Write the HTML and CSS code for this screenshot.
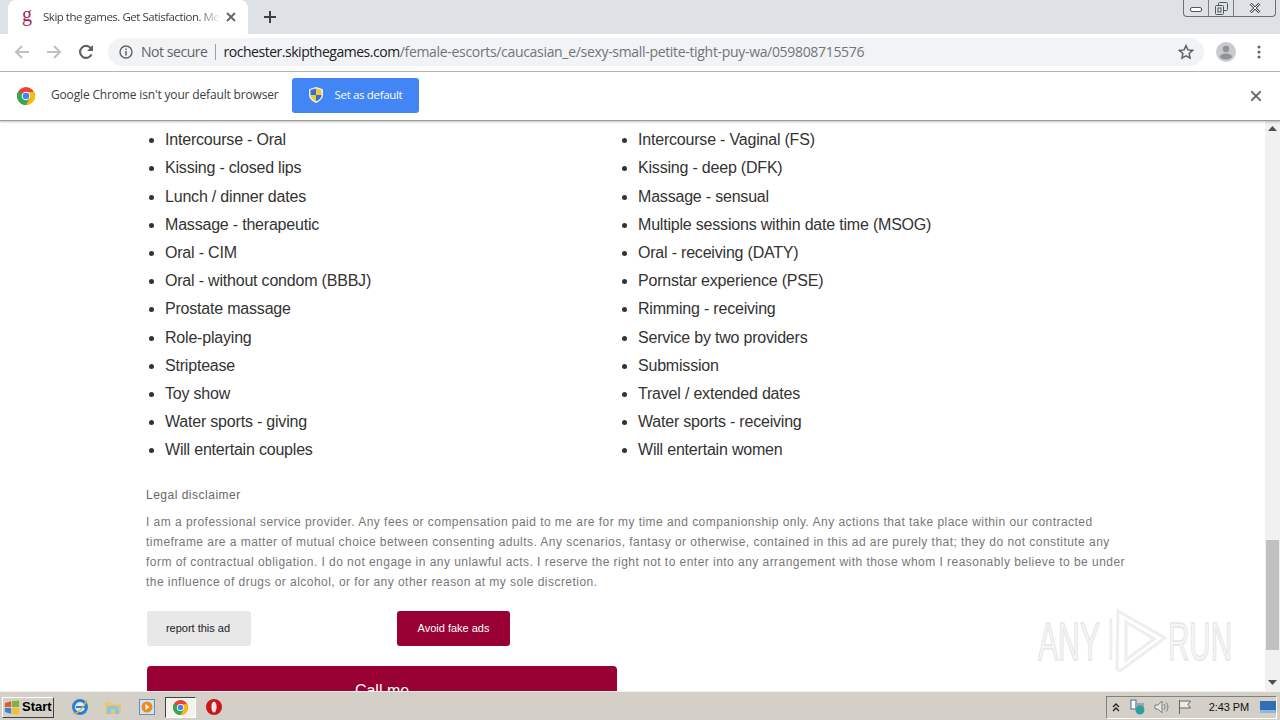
FILE: index.html
```html
<!DOCTYPE html>
<html lang="en">
<head>
<meta charset="utf-8">
<title>Skip the games</title>
<link rel="stylesheet" href="styles.css">
</head>
<body>
<div class="tabstrip">
  <div class="tab">
    <span class="favicon">g</span>
    <span class="tab-title">Skip the games. Get Satisfaction. Me</span>
    <svg class="tab-close" width="10" height="10" viewBox="0 0 10 10"><path d="M1 1l8 8M9 1l-8 8" stroke="#5f6368" stroke-width="1.8"/></svg>
  </div>
  <svg class="new-tab" width="12" height="12" viewBox="0 0 12 12"><path d="M6 0v12M0 6h12" stroke="#3c4043" stroke-width="2"/></svg>
  <div class="win-controls">
    <div class="win-btn win-min"><svg width="12" height="6" viewBox="0 0 12 6"><rect x=".5" y=".5" width="11" height="4" rx="1.5" fill="#fff" stroke="#50565e"/></svg></div>
    <div class="win-btn win-max"><svg width="13" height="13" viewBox="0 0 13 13"><rect x="3.5" y=".5" width="9" height="8" rx="1" fill="none" stroke="#50565e"/><rect x=".5" y="3.5" width="8" height="9" rx="1" fill="#dee1e6" stroke="#50565e"/><rect x="3" y="6" width="3" height="4" fill="none" stroke="#50565e"/></svg></div>
    <div class="win-btn win-close"><svg width="12" height="10" viewBox="0 0 12 10"><path d="M1.5 .5l9 9M10.5 .5l-9 9" stroke="#50565e" stroke-width="2.6"/><path d="M1.5 .5l9 9M10.5 .5l-9 9" stroke="#fff" stroke-width="1"/></svg></div>
  </div>
</div>

<div class="toolbar">
  <svg class="tb-icon" width="16" height="16" viewBox="0 0 16 16"><path d="M15 8H2M8 2L2 8l6 6" fill="none" stroke="#bdc1c6" stroke-width="2"/></svg>
  <svg class="tb-icon" width="16" height="16" viewBox="0 0 16 16"><path d="M1 8h13M8 2l6 6-6 6" fill="none" stroke="#bdc1c6" stroke-width="2"/></svg>
  <svg class="tb-icon" width="16" height="16" viewBox="0 0 16 16"><path d="M13.500 10.500A6 6 0 1 1 13 4.500" fill="none" stroke="#5f6368" stroke-width="2.200"/><path d="M15 1v6H9z" fill="#5f6368"/></svg>
  <div class="omnibox">
    <svg class="info" width="14" height="14" viewBox="0 0 14 14"><circle cx="7" cy="7" r="6" fill="none" stroke="#5f6368" stroke-width="1.400"/><path d="M7 6v4.500M7 3.400v1.600" stroke="#5f6368" stroke-width="1.500"/></svg>
    <span class="not-secure">Not secure</span>
    <span class="omni-sep"></span>
    <span class="url"><span class="url-host">rochester.skipthegames.com</span>/female-escorts/caucasian_e/sexy-small-petite-tight-puy-wa/059808715576</span>
    <svg class="star" width="16" height="16" viewBox="0 0 16 16"><path d="M8 1.600l1.900 4.300 4.700.5-3.500 3.100 1 4.600L8 11.800l-4.100 2.300 1-4.600-3.500-3.100 4.700-.5z" fill="none" stroke="#5f6368" stroke-width="1.500"/></svg>
  </div>
  <svg class="avatar" width="20" height="20" viewBox="0 0 20 20"><circle cx="10" cy="10" r="10" fill="#c8cacd"/><circle cx="10" cy="7" r="3.200" fill="#8f9296"/><ellipse cx="10" cy="14.500" rx="6" ry="3" fill="#8f9296"/></svg>
  <svg class="menu" width="4" height="14" viewBox="0 0 4 14"><circle cx="2" cy="2" r="1.500" fill="#5f6368"/><circle cx="2" cy="7" r="1.500" fill="#5f6368"/><circle cx="2" cy="12" r="1.500" fill="#5f6368"/></svg>
</div>

<div class="infobar">
  <svg class="chrome-logo" width="18" height="18" viewBox="0 0 18 18"><circle cx="9" cy="9" r="9" fill="#ea4335"/><path d="M9 9L1.200 4.500A9 9 0 0 0 9 18l4.500-7.800z" fill="#34a853"/><path d="M9 5h8a9 9 0 0 1-8 13l4.500-7.800z" fill="#fbbc05"/><circle cx="9" cy="9" r="4.300" fill="#fff"/><circle cx="9" cy="9" r="3.300" fill="#4285f4"/></svg>
  <span class="info-text">Google Chrome isn't your default browser</span>
  <div class="set-default">
    <svg width="14" height="16" viewBox="0 0 14 16"><path d="M7 .5l6.500 2v5.500c0 3.700-2.800 6-6.500 7.500C3.300 14 .5 11.700.5 8V2.500z" fill="#f4f1e4" stroke="#e8eef8"/><path d="M7 1.500v6.500H1.500V3zM7 8h5.500c0 3-2.200 5-5.500 6.300z" fill="#2f6fd6"/><path d="M7 1.500L12.500 3v5H7zM7 8v6.300C3.700 13 1.500 11 1.500 8z" fill="#f5c92e"/></svg>
    <span>Set as default</span>
  </div>
  <svg class="info-close" width="10" height="10" viewBox="0 0 10 10"><path d="M0 0l10 10M10 0L0 10" stroke="#5f6368" stroke-width="1.800"/></svg>
</div>

<div class="viewport">
  <main class="page">
    <div class="services">
      <ul class="svc-list">
        <li>Intercourse - Oral</li>
        <li>Kissing - closed lips</li>
        <li>Lunch / dinner dates</li>
        <li>Massage - therapeutic</li>
        <li>Oral - CIM</li>
        <li>Oral - without condom (BBBJ)</li>
        <li>Prostate massage</li>
        <li>Role-playing</li>
        <li>Striptease</li>
        <li>Toy show</li>
        <li>Water sports - giving</li>
        <li>Will entertain couples</li>
      </ul>
      <ul class="svc-list">
        <li>Intercourse - Vaginal (FS)</li>
        <li>Kissing - deep (DFK)</li>
        <li>Massage - sensual</li>
        <li>Multiple sessions within date time (MSOG)</li>
        <li>Oral - receiving (DATY)</li>
        <li>Pornstar experience (PSE)</li>
        <li>Rimming - receiving</li>
        <li>Service by two providers</li>
        <li>Submission</li>
        <li>Travel / extended dates</li>
        <li>Water sports - receiving</li>
        <li>Will entertain women</li>
      </ul>
    </div>
    <h4 class="legal-title">Legal disclaimer</h4>
    <p class="legal-text">I am a professional service provider. Any fees or compensation paid to me are for my time and companionship only. Any actions that take place within our contracted timeframe are a matter of mutual choice between consenting adults. Any scenarios, fantasy or otherwise, contained in this ad are purely that; they do not constitute any form of contractual obligation. I do not engage in any unlawful acts. I reserve the right not to enter into any arrangement with those whom I reasonably believe to be under the influence of drugs or alcohol, or for any other reason at my sole discretion.</p>
    <div class="actions">
      <a class="btn btn-grey">report this ad</a>
      <a class="btn btn-red">Avoid fake ads</a>
    </div>
    <a class="call">Call me</a>
  </main>
  <div class="scrollbar">
    <svg class="arrow" width="9" height="5" viewBox="0 0 9 5"><path d="M4.500 0L9 5H0z" fill="#505050"/></svg>
    <div class="thumb"></div>
    <svg class="arrow" width="9" height="5" viewBox="0 0 9 5"><path d="M0 0h9L4.500 5z" fill="#505050"/></svg>
  </div>
  <svg class="watermark" width="196" height="70" viewBox="0 0 196 70">
    <text class="wm-text" x="0" y="54" textLength="62" lengthAdjust="spacingAndGlyphs">ANY</text>
    <g fill="none" stroke="#eeeeee" stroke-width="3">
      <path d="M80 5l47 27-45 33-3-2z"/>
      <path d="M88 16l28 17-28 21z"/>
      <path d="M73 12v42"/>
    </g>
    <text class="wm-text" x="130" y="54" textLength="64" lengthAdjust="spacingAndGlyphs">RUN</text>
  </svg>
</div>

<div class="taskbar">
  <div class="start">
    <svg width="16" height="15" viewBox="0 0 18 16"><path d="M1 3l7-2v6.500H1z" fill="#e2592b"/><path d="M9 1l8-1v7.500H9z" fill="#7fb539"/><path d="M1 8.500h7V15l-7-2z" fill="#3a84d6"/><path d="M9 8.500h8V16l-8-1z" fill="#f5bf2d"/></svg>
    <span>Start</span>
  </div>
  <div class="tasks">
    <svg class="task" width="18" height="18" viewBox="0 0 18 18"><circle cx="9" cy="9" r="6.500" fill="#dceefb" stroke="#2a7fd4" stroke-width="3"/><path d="M5 9h9" stroke="#2a7fd4" stroke-width="2"/><path d="M2 15c3 2 9-3 14-13" fill="none" stroke="#e2b33c" stroke-width="1.500"/></svg>
    <svg class="task" width="18" height="16" viewBox="0 0 18 16"><path d="M1 3h6l2 2h8v10H1z" fill="#e9c76b"/><rect x="3" y="7" width="12" height="8" fill="#8fc3e4"/><rect x="7" y="10" width="4" height="5" fill="#e9c76b"/></svg>
    <svg class="task" width="16" height="16" viewBox="0 0 16 16"><rect x=".5" y=".5" width="15" height="15" fill="#d5e3ef" stroke="#5b93c7"/><circle cx="8" cy="8" r="5.500" fill="#ee8a1f"/><path d="M6.500 5l4 3-4 3z" fill="#fff"/></svg>
    <div class="task-active"><svg width="15" height="15" viewBox="0 0 18 18"><circle cx="9" cy="9" r="9" fill="#ea4335"/><path d="M9 9L1.200 4.500A9 9 0 0 0 9 18l4.500-7.800z" fill="#34a853"/><path d="M9 5h8a9 9 0 0 1-8 13l4.500-7.800z" fill="#fbbc05"/><circle cx="9" cy="9" r="4.300" fill="#fff"/><circle cx="9" cy="9" r="3.300" fill="#4285f4"/></svg></div>
    <svg class="task" width="16" height="16" viewBox="0 0 16 16"><circle cx="8" cy="8" r="8" fill="#c9151c"/><ellipse cx="8" cy="8" rx="2.600" ry="5.500" fill="#f6e3e3"/></svg>
  </div>
  <div class="tray">
    <svg class="tray-up" width="8" height="9" viewBox="0 0 8 9"><path d="M1 4l3-3 3 3M1 8l3-3 3 3" fill="none" stroke="#222" stroke-width="1.300"/></svg>
    <svg width="16" height="16" viewBox="0 0 16 16"><rect x="1" y="1" width="5" height="9" fill="#fff" stroke="#56697a"/><rect x="5" y="4" width="9" height="7" fill="#8fa7bc"/><circle cx="10" cy="11" r="4.500" fill="#2f9f9a"/></svg>
    <svg width="16" height="14" viewBox="0 0 16 14"><path d="M1 5h3l4-4v12l-4-4H1z" fill="#e8e6e0" stroke="#77808a"/><path d="M10 4c1.500 2 1.500 4 0 6M12.500 2.500c2 3 2 6 0 9" fill="none" stroke="#77808a"/></svg>
    <svg width="14" height="16" viewBox="0 0 14 16"><path d="M1.500 1v14M1.500 2h11l-2.500 3.500 2.500 3.500h-11" fill="#eceae4" stroke="#606870"/></svg>
    <span class="clock">2:43 PM</span>
    <svg class="desktop" width="16" height="12" viewBox="0 0 16 12"><rect width="16" height="12" fill="#2f6fb6"/><rect y="9" width="16" height="3" fill="#8db7dd"/></svg>
  </div>
</div>
</body>
</html>
```
FILE: styles.css
```css
* { box-sizing: border-box; }
html, body { margin: 0; padding: 0; }
body {
  width: 1280px;
  height: 720px;
  overflow: hidden;
  display: flex;
  flex-direction: column;
  background: #fff;
  font-family: "Liberation Sans", Arial, sans-serif;
}

/* browser chrome */
.tabstrip {
  height: 34px;
  flex: none;
  display: flex;
  align-items: flex-start;
  background: #dee1e6;
  padding-left: 8px;
}
.tab {
  width: 240px;
  height: 34px;
  background: #fff;
  border-radius: 8px 8px 0 0;
  display: flex;
  align-items: center;
  padding: 0 0 0 14px;
}
.favicon {
  width: 21px;
  flex: none;
  font: 20px/20px "Liberation Serif", serif;
  color: #a8274f;
  position: relative;
  top: -3px;
}
.tab-title {
  width: 178px;
  flex: none;
  white-space: nowrap;
  font: 11.5px/16px "Open Sans", sans-serif;
  letter-spacing: -.48px;
  color: #3c4043;
  -webkit-mask-image: linear-gradient(90deg, #000 155px, transparent 178px);
  mask-image: linear-gradient(90deg, #000 155px, transparent 178px);
}
.tab-close { margin-left: 5px; flex: none; }
.new-tab { margin: 11px 0 0 16px; flex: none; }
.win-controls {
  margin-left: auto;
  margin-right: 4px;
  height: 17px;
  display: flex;
  border: 1px solid #6b7078;
  border-top: 0;
  border-radius: 0 0 4px 4px;
}
.win-btn {
  height: 16px;
  display: flex;
  align-items: center;
  justify-content: center;
}
.win-btn + .win-btn { border-left: 1px solid #7a7f87; }
.win-min { width: 24px; padding-top: 4px; }
.win-max { width: 25px; }
.win-close { width: 42px; }

.toolbar {
  height: 38px;
  flex: none;
  display: flex;
  align-items: center;
  background: #fff;
  border-bottom: 1px solid #b6b6b6;
  padding: 0 0 1px 14px;
}
.tb-icon { margin-right: 16px; flex: none; }
.omnibox {
  width: 1096px;
  height: 28px;
  margin-left: -2px;
  display: flex;
  align-items: center;
  background: #f1f3f4;
  border-radius: 14px;
  padding: 0 10px 0 11px;
}
.not-secure {
  margin-left: 8px;
  font: 14px/18px "Open Sans", sans-serif;
  letter-spacing: -.45px;
  color: #5f6368;
}
.omni-sep {
  width: 1px;
  height: 16px;
  margin: 0 8px 0 7px;
  background: #9aa0a6;
}
.url {
  font: 14px/18px "Open Sans", sans-serif;
  letter-spacing: -.32px;
  color: #70757a;
  white-space: nowrap;
}
.url-host { color: #202124; letter-spacing: -.47px; }
.star { margin-left: auto; flex: none; }
.avatar { margin-left: 12px; flex: none; }
.menu { margin-left: 21px; flex: none; }

.infobar {
  height: 49px;
  flex: none;
  display: flex;
  align-items: center;
  background: #fff;
  border-bottom: 1px solid #9c9c9c;
  box-shadow: 0 1px 2px rgba(0,0,0,.25);
  padding: 0 0 0 17px;
  position: relative;
  z-index: 2;
}
.chrome-logo { flex: none; }
.info-text {
  margin: 0 0 2px 16px;
  font: 12px/18px "Open Sans", sans-serif;
  letter-spacing: -.16px;
  color: #3c4043;
  white-space: nowrap;
}
.set-default {
  margin: 0 0 2px 13px;
  width: 127px;
  height: 35px;
  display: flex;
  align-items: center;
  padding-left: 17px;
  background: #4285f4;
  border-radius: 3px;
  color: #fff;
  font: 11.5px/16px "Open Sans", sans-serif;
  letter-spacing: -.35px;
}
.set-default span { margin-left: 12px; }
.info-close { margin-left: auto; margin-right: 19px; flex: none; }

/* page viewport */
.viewport {
  flex: 1;
  min-height: 0;
  display: flex;
  position: relative;
  overflow: hidden;
}
.page {
  width: 1265px;
  flex: none;
  padding: 5.2px 0 0 146px;
  overflow: hidden;
}
.services { display: flex; }
.svc-list {
  width: 473px;
  flex: none;
  margin: 0;
  padding: 0 0 0 19px;
  font-size: 16px;
  line-height: 28.18px;
  letter-spacing: -.2px;
  color: #333;
}
.legal-title {
  margin: 20.8px 0 0;
  font-size: 12px;
  font-weight: 400;
  line-height: 20px;
  letter-spacing: .5px;
  color: #666;
}
.legal-text {
  width: 980px;
  margin: 7px 0 0;
  font-size: 12px;
  line-height: 20px;
  letter-spacing: .46px;
  color: #777;
}
.actions {
  display: flex;
  margin: 19px 0 0 1px;
}
.btn {
  height: 35px;
  display: flex;
  align-items: center;
  justify-content: center;
  padding-bottom: 1px;
  border-radius: 3px;
  font-size: 11px;
}
.btn-grey { width: 104px; background: #e8e8e8; color: #222; padding-right: 2px; }
.btn-red { width: 113px; margin-left: 146px; background: #990033; color: #fff; }
.call {
  display: block;
  width: 470px;
  height: 60px;
  margin: 20px 0 0 1px;
  padding-top: 16px;
  background: #990033;
  border-radius: 4px;
  color: #fff;
  font-size: 16px;
  line-height: 18px;
  text-align: center;
}

.scrollbar {
  width: 15px;
  flex: none;
  display: flex;
  flex-direction: column;
  align-items: center;
  background: #f1f1f1;
  padding: 5px 0 6px;
}
.thumb {
  width: 13px;
  height: 110px;
  margin-top: 409px;
  margin-bottom: auto;
  background: #c1c1c1;
}

.watermark {
  position: absolute;
  left: 1038px;
  top: 485px;
  pointer-events: none;
}
.wm-text {
  font: 53px "Liberation Sans", sans-serif;
  fill: #f6f6f6;
  stroke: #e6e6e6;
  stroke-width: 1.5;
}

/* windows taskbar */
.taskbar {
  height: 29px;
  flex: none;
  display: flex;
  align-items: center;
  background: #d4d0c8;
  border-top: 1px solid #f1efe9;
  padding: 2px 0 0 2px;
}
.start {
  width: 52px;
  height: 21px;
  display: flex;
  align-items: center;
  gap: 2px;
  padding-left: 1px;
  background: #d4d0c8;
  border: 1px solid;
  border-color: #fff #404040 #404040 #fff;
  font: 700 13px/16px "Liberation Sans", sans-serif;
  color: #000;
}
.tasks {
  display: flex;
  align-items: center;
  margin-left: 9px;
}
.task { flex: none; margin: 0 8px; }
.task:nth-child(2) { margin-left: 7px; }
.task:nth-child(3) { margin-left: 9px; margin-right: 10px; }
.task-active {
  width: 31px;
  height: 21px;
  display: flex;
  align-items: center;
  justify-content: center;
  background: #f4f2ee;
  border: 1px solid;
  border-color: #404040 #fff #fff #404040;
  margin-right: 2px;
}
.tray {
  margin-left: auto;
  margin-right: 3px;
  width: 171px;
  height: 23px;
  display: flex;
  align-items: center;
  padding-left: 5px;
  gap: 8px;
  border: 1px solid;
  border-color: #808080 #fff #fff #808080;
}
.tray-up { margin-right: 2px; }
.clock {
  margin-left: 9px;
  font: 11px/14px "Liberation Sans", sans-serif;
  letter-spacing: -.1px;
  color: #111;
  white-space: nowrap;
}
.desktop { margin-left: 3px; flex: none; }
```
